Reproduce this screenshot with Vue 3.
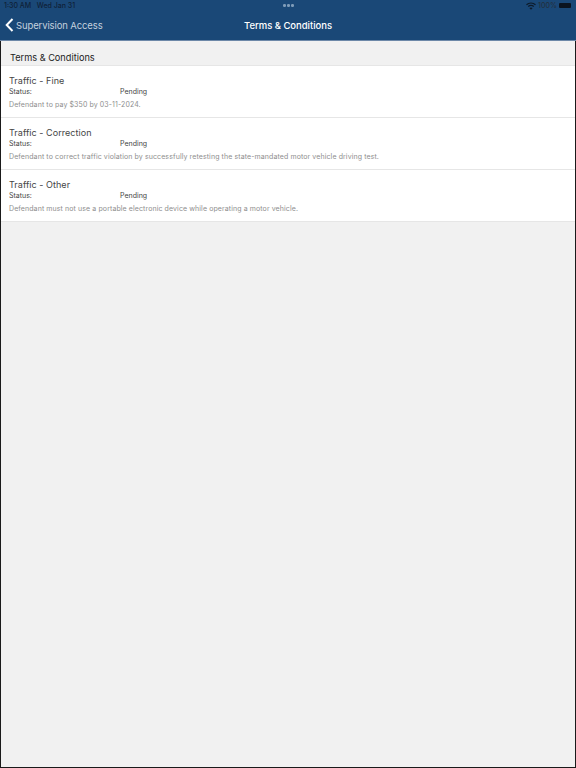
<script setup>
const terms = [
  { title: 'Traffic - Fine', status: 'Pending', text: 'Defendant to pay $350 by 03-11-2024.' },
  { title: 'Traffic - Correction', status: 'Pending', text: 'Defendant to correct traffic violation by successfully retesting the state-mandated motor vehicle driving test.' },
  { title: 'Traffic - Other', status: 'Pending', text: 'Defendant must not use a portable electronic device while operating a motor vehicle.' },
];
</script>

<template>
  <div class="screen">
    <header class="top">
      <div class="statusbar">
        <span class="clock">1:30 AM&nbsp;&nbsp; Wed Jan 31</span>
        <div class="dots"><i></i><i></i><i></i></div>
        <div class="status-right">
          <svg class="wifi" width="10" height="8" viewBox="0 0 20 16">
            <path d="M1 5.5 C6 0.8 14 0.8 19 5.5" fill="none" stroke="#0d1b2a" stroke-width="2.4" />
            <path d="M4.4 9 C7.6 6.2 12.4 6.2 15.6 9" fill="none" stroke="#0d1b2a" stroke-width="2.4" />
            <path d="M10 15.5 L6.8 12.2 C8.6 10.8 11.4 10.8 13.2 12.2 Z" fill="#0d1b2a" />
          </svg>
          <span>100%</span>
          <span class="battery"><b></b></span>
        </div>
      </div>
      <div class="navbar">
        <div class="back">
          <svg width="9" height="14" viewBox="0 0 9 14">
            <path d="M7.5 1 L1.7 7 L7.5 13" fill="none" stroke="#fff" stroke-width="2" />
          </svg>
          <span>Supervision Access</span>
        </div>
        <div class="title">Terms &amp; Conditions</div>
      </div>
    </header>

    <main class="content">
      <h2 class="section">Terms &amp; Conditions</h2>
      <div v-for="term in terms" :key="term.title" class="term">
        <div class="term-title">{{ term.title }}</div>
        <div class="term-status">
          <span class="status-label">Status:</span>
          <span>{{ term.status }}</span>
        </div>
        <div class="term-text">{{ term.text }}</div>
      </div>
    </main>
  </div>
</template>

<style>
html, body {
  margin: 0;
  background: #1a1a1a;
}
</style>

<style scoped>
.screen {
  width: 576px;
  height: 768px;
  display: flex;
  flex-direction: column;
  box-sizing: border-box;
  font-family: Inter, "Liberation Sans", sans-serif;
  background: #1a1a1a;
}

.top {
  background: #1a4877;
  border-bottom: 1px solid #6d88a8;
  height: 40px;
  flex: none;
}

.statusbar {
  height: 11px;
  padding: 0 3px 0 4px;
  display: grid;
  grid-template-columns: 1fr auto 1fr;
  align-items: center;
  font-size: 7px;
  font-weight: 500;
  color: #0f2138;
}

.dots {
  display: flex;
  gap: 1.5px;
}

.dots i {
  width: 2.5px;
  height: 2.5px;
  border-radius: 50%;
  background: #7f9cb9;
}

.status-right {
  display: flex;
  align-items: center;
  justify-content: flex-end;
  gap: 2px;
  color: #22303f;
}

.battery {
  width: 14px;
  height: 6px;
  display: block;
}

.battery b {
  display: block;
  width: 12px;
  height: 5.5px;
  border-radius: 1px;
  background: #0b1420;
}

.navbar {
  height: 28px;
  display: grid;
  grid-template-columns: 1fr auto 1fr;
  align-items: center;
  padding: 0 5px;
}

.back {
  display: flex;
  align-items: center;
  gap: 2px;
  color: #c3d0de;
  font-size: 9.5px;
  letter-spacing: -0.12px;
}

.title {
  color: #fff;
  font-size: 9.5px;
  font-weight: 500;
  letter-spacing: -0.03px;
}

.content {
  flex: 1;
  margin: 0 1px 1px 1px;
  background: #f1f1f1;
}

.section {
  margin: 0;
  height: 24px;
  padding: 10px 0 0 9px;
  box-sizing: border-box;
  font-size: 9.2px;
  font-weight: 400;
  line-height: 13px;
  color: #222;
}

.term {
  height: 52px;
  box-sizing: border-box;
  background: #fff;
  border-top: 1px solid #e6e6e6;
  padding: 9px 8px 0;
}

.term:last-child {
  height: 53px;
  border-bottom: 1px solid #e6e6e6;
}

.term-title {
  font-size: 9px;
  line-height: 12px;
  color: #444;
  letter-spacing: 0.05px;
}

.term-status {
  display: flex;
  font-size: 7px;
  line-height: 10px;
  color: #444;
}

.status-label {
  width: 111px;
}

.term-text {
  margin-top: 3px;
  font-size: 7px;
  line-height: 10px;
  color: #8e8e8e;
  letter-spacing: 0.1px;
}
</style>
